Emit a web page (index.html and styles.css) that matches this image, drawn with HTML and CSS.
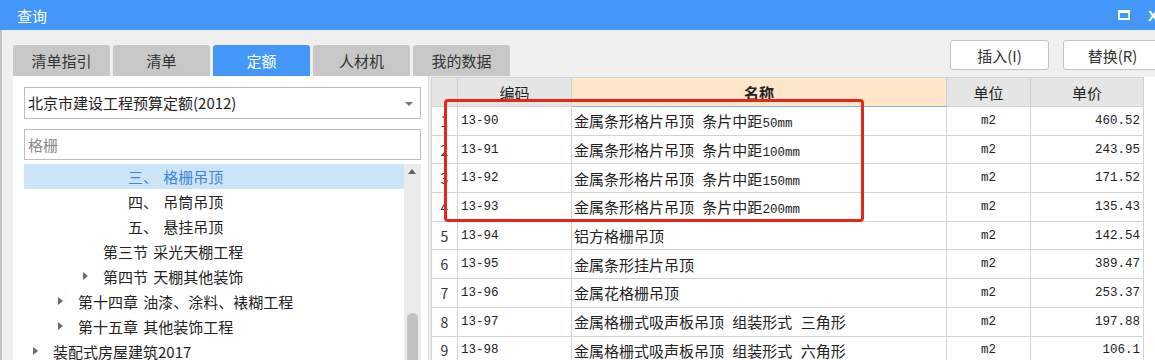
FILE: index.html
```html
<!DOCTYPE html>
<html lang="zh-CN">
<head>
    <meta charset="UTF-8">
    <title>查询</title>
    <link rel="stylesheet" href="styles.css">
</head>
<body>
    <div class="window">
        <div class="titlebar">
            <span class="title">查询</span>
            <span class="win-btns">
                <span class="max-icon"></span>
                <span class="close">X</span>
            </span>
        </div>

        <div class="frame">
            <div class="toolbar">
                <div class="tabs">
                    <div class="tab">清单指引</div>
                    <div class="tab">清单</div>
                    <div class="tab active">定额</div>
                    <div class="tab">人材机</div>
                    <div class="tab">我的数据</div>
                </div>
                <div class="actions">
                    <button class="btn">插入(I)</button>
                    <button class="btn">替换(R)</button>
                </div>
            </div>

            <div class="content">
                <div class="left-panel">
                    <div class="select">北京市建设工程预算定额(2012)<span class="caret"></span></div>
                    <input class="search" type="text" placeholder="格栅">
                    <div class="tree">
                        <ul class="tree-list">
                            <li class="node lv3 selected"><span class="toggle"></span>三、 格栅吊顶</li>
                            <li class="node lv3"><span class="toggle"></span>四、 吊筒吊顶</li>
                            <li class="node lv3"><span class="toggle"></span>五、 悬挂吊顶</li>
                            <li class="node lv2"><span class="toggle"></span>第三节 采光天棚工程</li>
                            <li class="node lv2"><span class="toggle closed"></span>第四节 天棚其他装饰</li>
                            <li class="node lv1"><span class="toggle closed"></span>第十四章 油漆、涂料、裱糊工程</li>
                            <li class="node lv1"><span class="toggle closed"></span>第十五章 其他装饰工程</li>
                            <li class="node lv0"><span class="toggle closed"></span>装配式房屋建筑2017</li>
                        </ul>
                        <div class="scrollbar">
                            <span class="arrow-up"></span>
                            <span class="thumb"></span>
                        </div>
                    </div>
                </div>

                <div class="grid-wrap">
                    <table class="grid">
                        <colgroup>
                            <col class="c-no">
                            <col class="c-code">
                            <col class="c-name">
                            <col class="c-unit">
                            <col class="c-price">
                        </colgroup>
                        <thead>
                            <tr>
                                <th></th>
                                <th>编码</th>
                                <th class="sorted">名称</th>
                                <th>单位</th>
                                <th>单价</th>
                            </tr>
                        </thead>
                        <tbody>
                            <tr><td class="no">1</td><td class="code">13-90</td><td class="name">金属条形格片吊顶 条片中距<span class="mm">50mm</span></td><td class="unit">m2</td><td class="price">460.52</td></tr>
                            <tr><td class="no">2</td><td class="code">13-91</td><td class="name">金属条形格片吊顶 条片中距<span class="mm">100mm</span></td><td class="unit">m2</td><td class="price">243.95</td></tr>
                            <tr><td class="no">3</td><td class="code">13-92</td><td class="name">金属条形格片吊顶 条片中距<span class="mm">150mm</span></td><td class="unit">m2</td><td class="price">171.52</td></tr>
                            <tr><td class="no">4</td><td class="code">13-93</td><td class="name">金属条形格片吊顶 条片中距<span class="mm">200mm</span></td><td class="unit">m2</td><td class="price">135.43</td></tr>
                            <tr><td class="no">5</td><td class="code">13-94</td><td class="name">铝方格栅吊顶</td><td class="unit">m2</td><td class="price">142.54</td></tr>
                            <tr><td class="no">6</td><td class="code">13-95</td><td class="name">金属条形挂片吊顶</td><td class="unit">m2</td><td class="price">389.47</td></tr>
                            <tr><td class="no">7</td><td class="code">13-96</td><td class="name">金属花格栅吊顶</td><td class="unit">m2</td><td class="price">253.37</td></tr>
                            <tr><td class="no">8</td><td class="code">13-97</td><td class="name">金属格栅式吸声板吊顶 组装形式 三角形</td><td class="unit">m2</td><td class="price">197.88</td></tr>
                            <tr><td class="no">9</td><td class="code">13-98</td><td class="name">金属格栅式吸声板吊顶 组装形式 六角形</td><td class="unit">m2</td><td class="price">106.1</td></tr>
                        </tbody>
                    </table>
                    <div class="highlight"></div>
                </div>
            </div>
        </div>
    </div>
</body>
</html>
```

FILE: styles.css
```css
html, body {
    margin: 0;
    padding: 0;
}

body {
    width: 1155px;
    height: 360px;
    overflow: hidden;
    font-family: "Noto Sans CJK SC", "Noto Sans", sans-serif;
    background-color: #f0f0f0;
    color: #222;
}

.window {
    width: 1155px;
}

/* title bar */
.titlebar {
    height: 30px;
    background-color: #4397f9;
    color: #fff;
    display: flex;
    align-items: center;
    justify-content: space-between;
    padding-left: 17px;
}

.title {
    font-size: 15px;
}

.win-btns {
    display: flex;
    align-items: center;
    gap: 18px;
    margin-right: -8px;
}

.max-icon {
    width: 8px;
    height: 5px;
    border: 2px solid #fff;
    border-top-width: 3px;
}

.close {
    font-family: "Liberation Sans", sans-serif;
    font-size: 15px;
    font-weight: bold;
    width: 15px;
}

/* window body */
.frame {
    border-left: 2px solid #c4c4c4;
    padding-left: 11px;
}

.toolbar {
    height: 46px;
    display: flex;
    justify-content: space-between;
}

.tabs {
    display: flex;
    align-items: flex-end;
    gap: 3px;
}

.tab {
    width: 97px;
    height: 31px;
    line-height: 31px;
    text-align: center;
    font-size: 15px;
    color: #333;
    background-color: #c7c7c7;
    border-radius: 3px 3px 0 0;
}

.tab.active {
    background-color: #4397f9;
    color: #fff;
}

.actions {
    display: flex;
    gap: 14px;
    padding-top: 10px;
    margin-right: -7px;
}

.btn {
    width: 99px;
    height: 30px;
    background-color: #fff;
    border: 1px solid #c3c3c3;
    border-radius: 3px;
    font-family: "Noto Sans CJK SC", sans-serif;
    font-size: 15px;
    color: #333;
    padding: 0;
}

.content {
    display: flex;
    height: 284px;
}

/* left panel */
.left-panel {
    width: 416px;
    background-color: #fff;
    padding: 11px 7px 0 11px;
    border-right: 1px solid #d6d6d6;
    margin-right: 2px;
    box-sizing: border-box;
}

.select {
    position: relative;
    height: 32px;
    line-height: 30px;
    border: 1px solid #bcbcbc;
    box-sizing: border-box;
    padding-left: 3px;
    font-size: 15px;
    color: #222;
}

.caret {
    position: absolute;
    right: 7px;
    top: 14px;
    border-left: 4px solid transparent;
    border-right: 4px solid transparent;
    border-top: 4px solid #777;
}

.search {
    display: block;
    width: 100%;
    height: 31px;
    margin-top: 10px;
    border: 1px solid #bcbcbc;
    box-sizing: border-box;
    padding: 0 3px;
    font-family: "Noto Sans CJK SC", sans-serif;
    font-size: 15px;
    outline: none;
}

.search::placeholder {
    color: #888;
}

.tree {
    display: flex;
    margin-top: 4px;
    height: 200px;
}

.tree-list {
    list-style: none;
    margin: 0;
    padding: 0;
    flex: 1;
}

.node {
    height: 25px;
    line-height: 25px;
    font-size: 15px;
    color: #222;
    display: flex;
    align-items: center;
    white-space: nowrap;
    word-spacing: 2px;
}

.node.lv0 { padding-left: 9px; }
.node.lv1 { padding-left: 34px; }
.node.lv2 { padding-left: 59px; }
.node.lv3 { padding-left: 84px; }

.node.selected {
    background-color: #cce4f8;
    color: #3a85d8;
}

.toggle {
    width: 20px;
    height: 25px;
    flex-shrink: 0;
    position: relative;
}

.toggle.closed::before {
    content: "";
    position: absolute;
    left: 0;
    top: 8px;
    border-top: 4.5px solid transparent;
    border-bottom: 4.5px solid transparent;
    border-left: 5px solid #6b6b6b;
}

.scrollbar {
    width: 17px;
    background-color: #ebebeb;
    position: relative;
}

.arrow-up {
    position: absolute;
    left: 4px;
    top: 5px;
    border-left: 4.5px solid transparent;
    border-right: 4.5px solid transparent;
    border-bottom: 5px solid #606060;
}

.thumb {
    position: absolute;
    left: 3px;
    top: 149px;
    width: 11px;
    height: 80px;
    border-radius: 6px;
    background-color: #c1c1c1;
}

/* grid */
.grid-wrap {
    flex: 1;
    position: relative;
    background-color: #fff;
    margin-top: 1px;
}

.grid {
    border-collapse: collapse;
    table-layout: fixed;
    width: 713px;
}

.c-no { width: 26px; }
.c-code { width: 114px; }
.c-name { width: 375px; }
.c-unit { width: 84px; }
.c-price { width: 113px; }

.grid th,
.grid td {
    border: 1px solid #d2d2d2;
    padding: 0;
    white-space: nowrap;
    overflow: hidden;
}

.grid th {
    height: 28px;
    background-color: #e5e5e5;
    font-weight: normal;
    font-size: 15px;
    color: #222;
}

.grid th.sorted {
    background-color: #fde6c9;
    font-weight: bold;
    border-bottom: 1px solid #7fb2e5;
}

.grid td {
    height: 27.7px;
    font-size: 15px;
}

.grid td.no {
    text-align: center;
    font-size: 14px;
    color: #333;
}

.grid td.code,
.grid td.unit,
.grid td.price,
.grid .mm {
    font-family: "Liberation Mono", monospace;
    font-size: 12.5px;
}

.grid td.code {
    padding-left: 3px;
}

.grid td.name {
    padding-left: 2px;
    word-spacing: 5px;
}

.grid td.unit {
    text-align: center;
}

.grid td.price {
    text-align: right;
    padding-right: 3px;
}

.highlight {
    position: absolute;
    left: 13px;
    top: 22px;
    width: 414px;
    height: 117px;
    border: 3px solid #e8241c;
    border-radius: 4px;
}
```
